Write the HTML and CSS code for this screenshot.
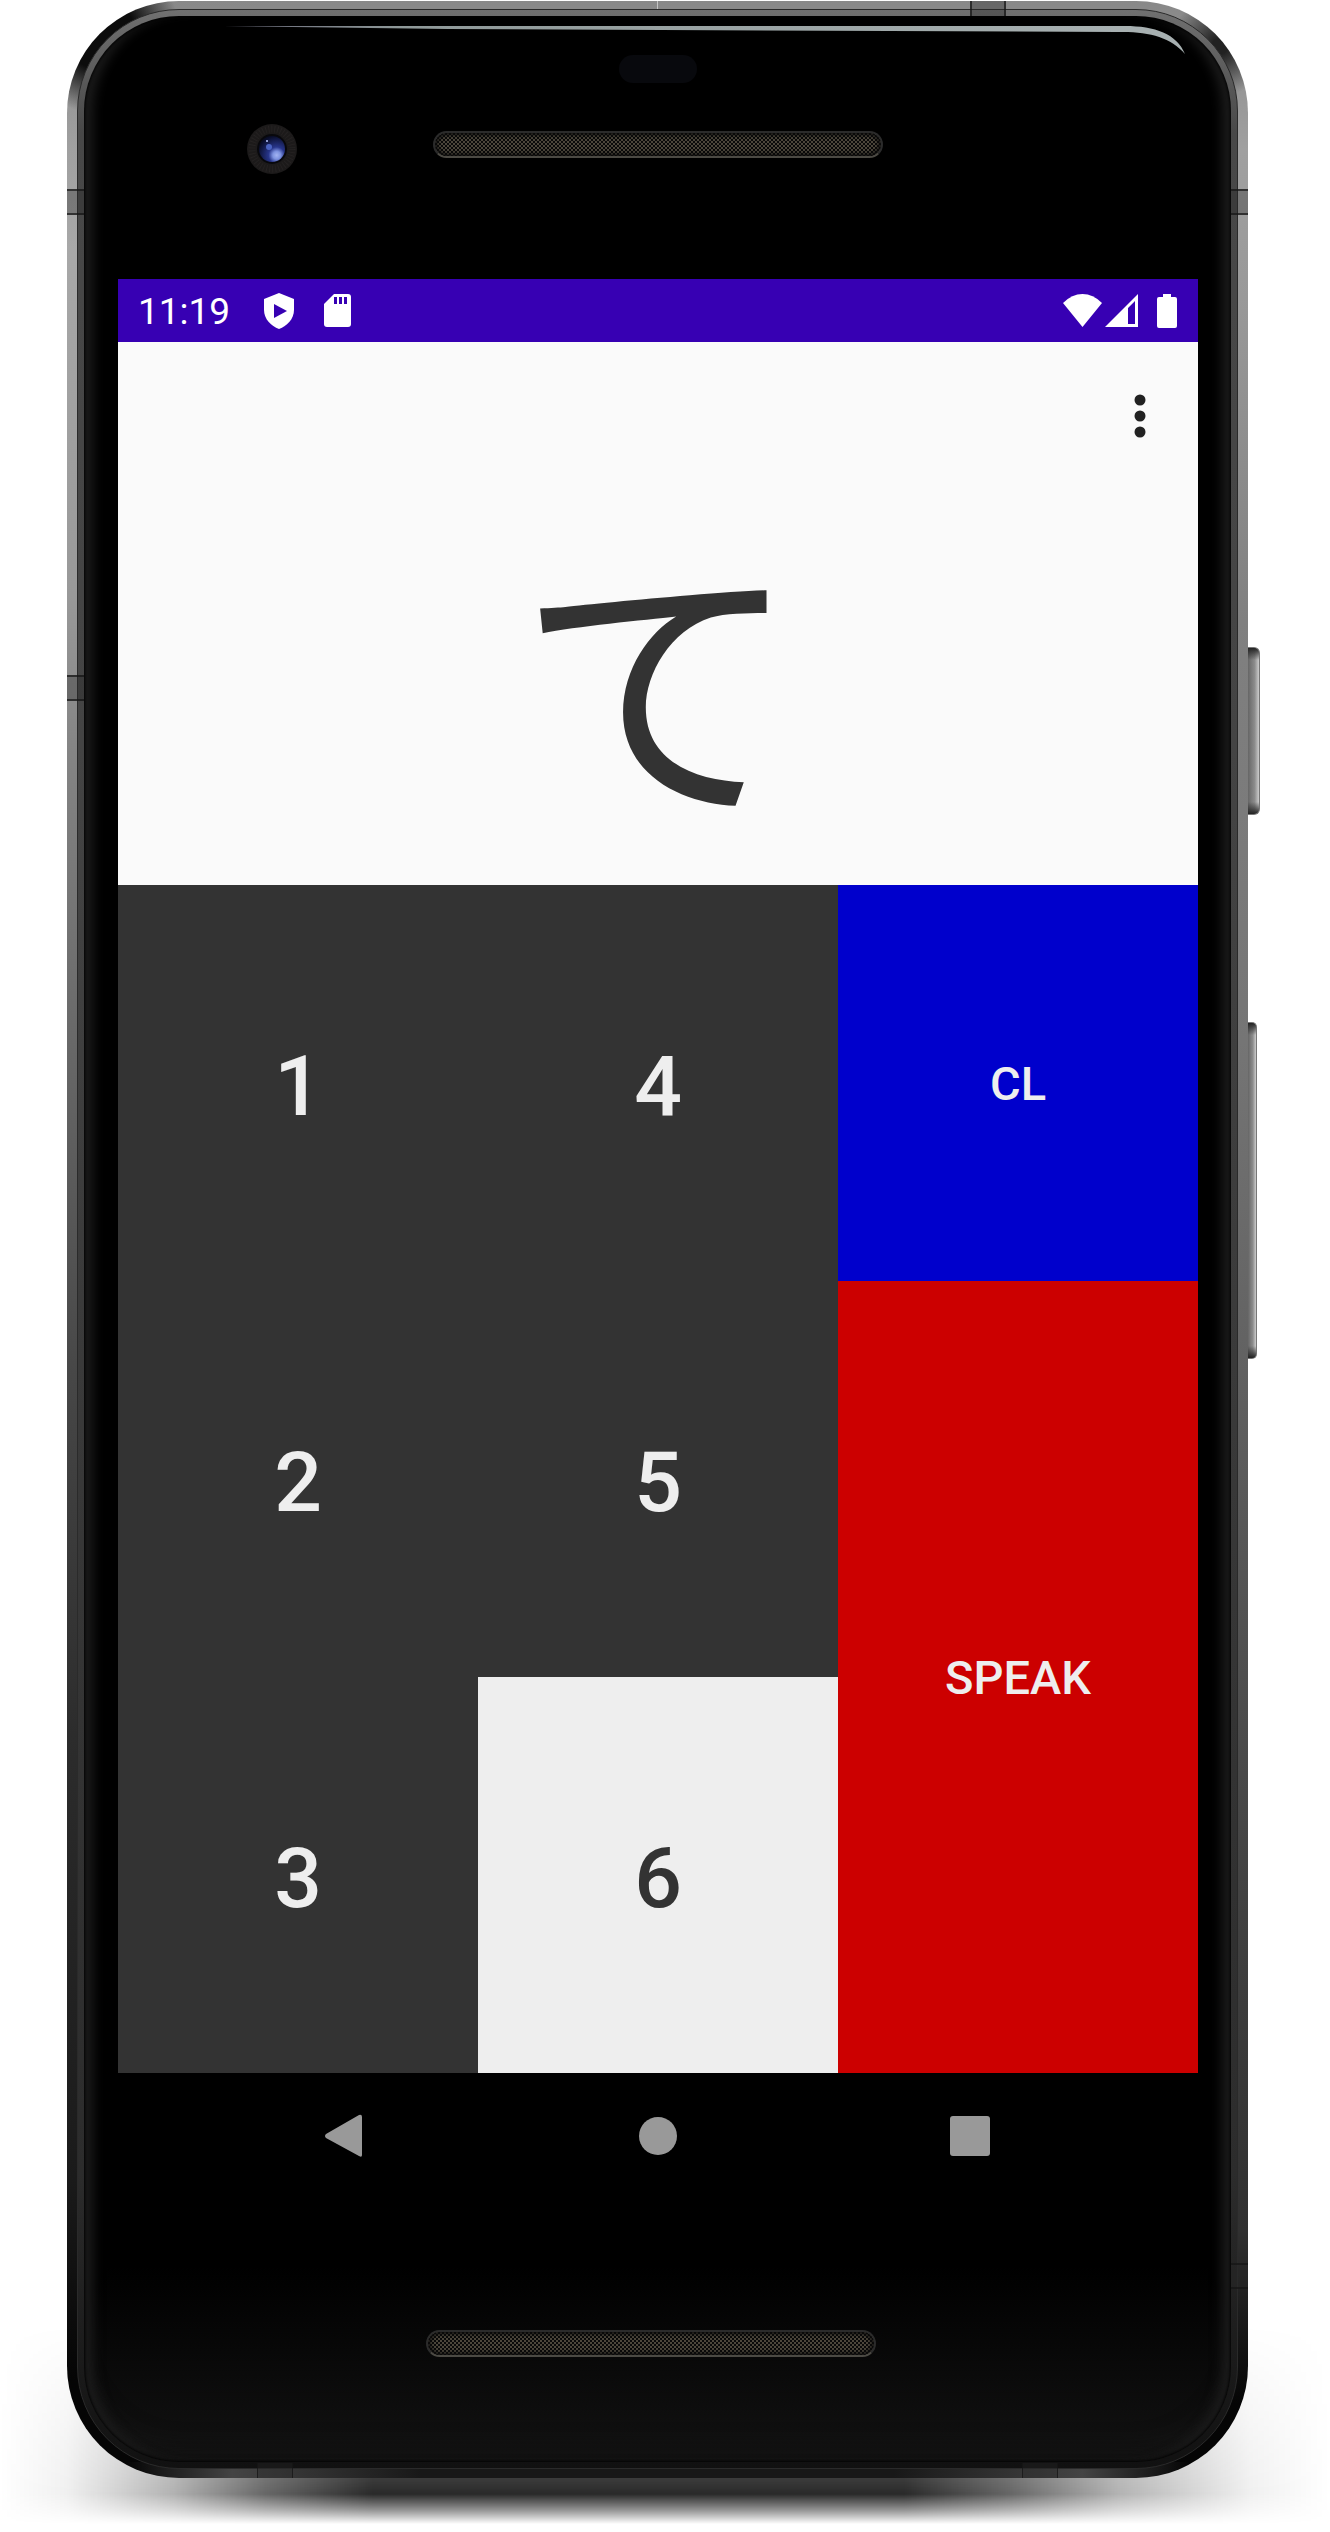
FILE: index.html
```html
<!DOCTYPE html>
<html lang="en">
<head>
<meta charset="utf-8">
<meta name="viewport" content="width=device-width, initial-scale=1">
<title>Kana keypad</title>
<link rel="stylesheet" href="styles.css">
</head>
<body>
<main class="stage">
  <div class="shadow"></div>
  <div class="phone">
    <span class="side-key power"></span>
    <span class="side-key volume"></span>
    <div class="rim">
      <div class="glass">
        <span class="shine">
          <svg class="shine-corner" viewBox="0 0 70 32" aria-hidden="true"><path d="M0 0H8C38 0 60 8 68 28C54 12 34 6 6 6H0Z" fill="#a7b0b1"/></svg>
        </span>
        <header class="top-bezel">
          <span class="sensor"></span>
          <span class="camera">
            <svg viewBox="0 0 52 52" aria-hidden="true">
              <defs>
                <radialGradient id="lens" cx=".68" cy=".74" r=".75">
                  <stop offset="0" stop-color="#a3b4f2"/><stop offset=".2" stop-color="#7d92e0"/><stop offset=".42" stop-color="#27358a"/><stop offset="1" stop-color="#080c26"/>
                </radialGradient>
              </defs>
              <circle cx="26" cy="26" r="25" fill="#1c1a1a"/>
              <circle cx="26" cy="26" r="20" fill="none" stroke="#252222" stroke-width="7" stroke-dasharray="1 2"/>
              <circle cx="26" cy="26" r="15" fill="#08080c"/>
              <circle cx="26" cy="26" r="13" fill="url(#lens)"/>
              <circle cx="23" cy="24" r="3" fill="#4a62c0"/>
              <circle cx="21" cy="18" r="1" fill="#b9c6ff"/>
            </svg>
          </span>
          <span class="speaker"></span>
        </header>

        <section class="screen">
          <div class="status">
            <time class="clock">11:19</time>
            <svg class="shield" viewBox="0 0 30 36" aria-hidden="true"><path fill="#fff" d="M15 0L30 6V17C30 26 23 33 15 36C7 33 0 26 0 17V6Z"/><path fill="#3700b3" d="M10 11V25L23 18Z"/></svg>
            <svg class="card" viewBox="0 0 27 33" aria-hidden="true"><path fill="#fff" d="M10 0H24Q27 0 27 3V30Q27 33 24 33H3Q0 33 0 30V10Z"/><path fill="#3700b3" d="M10 3h3v7h-3zM15 3h3v7h-3zM20 3h3v7h-3z"/></svg>
            <span class="spacer"></span>
            <svg class="wifi" viewBox="0 0 39 33" aria-hidden="true"><path fill="#fff" d="M0 9Q9 0 19.5 0T39 9L19.5 33Z"/></svg>
            <svg class="signal" viewBox="0 0 33 33" aria-hidden="true"><path fill="#fff" fill-rule="evenodd" d="M33 0V33H0ZM30 7L23 14V30H30Z"/></svg>
            <svg class="battery" viewBox="0 0 20 34" aria-hidden="true"><path fill="#fff" d="M6 0H14V3H18Q20 3 20 5V32Q20 34 18 34H2Q0 34 0 32V5Q0 3 2 3H6Z"/></svg>
          </div>

          <div class="display">
            <button class="menu" type="button" aria-label="More options">
              <svg viewBox="0 0 12 44" aria-hidden="true"><g fill="#212121"><circle cx="6" cy="6" r="5.5"/><circle cx="6" cy="22" r="5.5"/><circle cx="6" cy="38" r="5.5"/></g></svg>
            </button>
            <output class="kana" lang="ja">て</output>
          </div>

          <div class="keypad">
            <button class="key" type="button">1</button>
            <button class="key" type="button">2</button>
            <button class="key" type="button">3</button>
            <button class="key" type="button">4</button>
            <button class="key" type="button">5</button>
            <button class="key pressed" type="button" aria-pressed="true">6</button>
            <button class="key clear" type="button">CL</button>
            <button class="key speak" type="button">SPEAK</button>
          </div>

          <nav class="nav">
            <button type="button" aria-label="Back"><svg viewBox="0 0 42 42" aria-hidden="true"><path fill="#999" d="M34 0Q37 -1 37 2V40Q37 43 34 41L1 23Q-1 21 1 19Z"/></svg></button>
            <button type="button" aria-label="Home"><svg viewBox="0 0 42 42" aria-hidden="true"><circle cx="21" cy="21" r="19" fill="#999"/></svg></button>
            <button type="button" aria-label="Overview"><svg viewBox="0 0 42 42" aria-hidden="true"><rect x="1" y="1" width="40" height="40" rx="3" fill="#999"/></svg></button>
          </nav>
        </section>

        <footer class="bottom-bezel"><span class="speaker"></span></footer>
      </div>
    </div>
    <span class="band left high"></span>
    <span class="band left mid"></span>
    <span class="band right high"></span>
    <span class="band right low"></span>
    <span class="band top"></span>
    <span class="band bottom start"></span>
    <span class="band bottom end"></span>
  </div>
</main>
</body>
</html>
```
FILE: styles.css
```css
* { box-sizing: border-box; }

body {
  margin: 0;
  background: #fff;
  font-family: Roboto, "Noto Sans CJK JP", sans-serif;
}

button {
  margin: 0;
  padding: 0;
  border: 0;
  background: none;
  font: inherit;
  color: inherit;
}

svg { display: block; }

.stage {
  position: relative;
  padding: 1px 82px 54px 67px;
  overflow: hidden;
}

/* Floor shadow, wider than the body and darkest under its middle */
.shadow {
  position: absolute;
  left: 0;
  right: 0;
  bottom: 8px;
  height: 200px;
  background: linear-gradient(90deg, transparent, rgba(0,0,0,.06) 5%, rgba(0,0,0,.3) 13%, rgba(0,0,0,.6) 20%, rgba(0,0,0,.84) 28%, rgba(0,0,0,.84) 68%, rgba(0,0,0,.6) 76%, rgba(0,0,0,.3) 84%, rgba(0,0,0,.06) 94%, transparent);
  -webkit-mask-image: linear-gradient(transparent, rgba(0,0,0,.5) 40%, #000 85%, rgba(0,0,0,.5) 93%, transparent);
  mask-image: linear-gradient(transparent, rgba(0,0,0,.5) 40%, #000 85%, rgba(0,0,0,.5) 93%, transparent);
}

/* Metal body: dark reflections in the top corners, left side darker than right */
.phone {
  position: relative;
  padding: 8px 10px 9px;
  border-radius: 112px;
  background:
    radial-gradient(circle at 33px 33px, #0c0c0c 35px, transparent 80px) 0 0 / 120px 120px no-repeat,
    radial-gradient(circle at 92px 45px, #222 8px, transparent 50px) 100% 0 / 120px 120px no-repeat,
    linear-gradient(90deg, transparent 5%, #444 14%, #181818 30%, #181818 70%, #444 86%, transparent 95%) 0 100% / 100% 16px no-repeat,
    linear-gradient(#888, #a0a0a0 6%, #a8a8a8 10%, #999 24%, #858585 30%, #666 43%, #484848 55%, #2c2c2c 70%, #1a1a1a 88%, #050505 96%) 0 0 / 50% 100% no-repeat,
    linear-gradient(#888, #a0a0a0 6%, #999 12%, #808080 25%, #757575 42%, #606060 56%, #444 75%, #303030 90%, #050505 97%) 100% 0 / 50% 100% no-repeat;
}

.rim {
  padding: 7px;
  border-radius: 102px;
  border: 1px solid #2a2a2a;
  background: linear-gradient(#707070, #484848 5%, #444 30%, #383838 60%, #2c2c2c 88%, #111);
}

.glass {
  position: relative;
  margin: -1px;
  border-radius: 95px;
  background: linear-gradient(transparent 92%, #101010 99%, #0a0a0a) #000;
  box-shadow: inset 0 0 3px 1px #000, inset 15px 0 12px -6px #1c1c1c, inset -15px 0 12px -6px #1c1c1c, inset 0 -24px 30px -20px #1c1c1c;
}

.shine {
  position: absolute;
  top: 10px;
  left: 140px;
  right: 44px;
  height: 32px;
}

.shine::before {
  content: "";
  position: absolute;
  inset: 0 69px auto 0;
  height: 6px;
  background: linear-gradient(90deg, #667, #8f9999 20%, #a7b0b1);
  clip-path: polygon(0 0, 100% 0, 100% 100%, 25% 3px);
}

.shine-corner {
  position: absolute;
  top: 0;
  right: 0;
  width: 70px;
  height: 32px;
}

.top-bezel {
  position: relative;
  height: 263px;
  display: flex;
  justify-content: center;
}

.sensor {
  position: absolute;
  top: 39px;
  width: 78px;
  height: 28px;
  border-radius: 14px;
  background: #08090d;
}

.camera {
  position: absolute;
  left: 162px;
  top: 107px;
  width: 52px;
}

.speaker {
  width: 450px;
  height: 27px;
  border: 2px solid #2b2b2b;
  border-bottom-color: #4c4a44;
  border-radius: 14px;
  background:
    radial-gradient(circle at 1px 1px, #4c463b 1px, transparent 1px) 0 0 / 4px 4px,
    radial-gradient(circle at 3px 3px, #4c463b 1px, transparent 1px) 0 0 / 4px 4px,
    #0a0a0a;
  box-shadow: inset 0 0 4px 2px #0a0a0a;
}

.top-bezel .speaker { margin-top: 115px; }

.bottom-bezel {
  height: 263px;
  display: flex;
  justify-content: center;
  padding: 131px 14px 0 0;
}

.screen {
  margin: 0 33px 0 34px;
  background: #fafafa;
}

.status {
  height: 63px;
  display: flex;
  align-items: center;
  padding: 0 21px 0 20px;
  background: #3700b3;
  color: #fff;
}

.clock {
  width: 126px;
  padding-top: 2px;
  font-size: 37px;
  line-height: 44px;
}

.shield { width: 30px; height: 36px; }
.card { width: 27px; height: 33px; margin-left: 30px; }
.spacer { flex: 1; }
.wifi { width: 39px; height: 33px; }
.signal { width: 33px; height: 33px; margin-left: 3px; }
.battery { width: 20px; height: 34px; margin-left: 19px; }

.display {
  position: relative;
  height: 543px;
  display: flex;
  align-items: center;
  justify-content: center;
  padding-top: 120px;
  color: #333;
}

.menu {
  position: absolute;
  top: 26px;
  right: 10px;
  width: 96px;
  height: 96px;
  display: grid;
  place-items: center;
}

.menu svg { width: 12px; height: 44px; }

.kana {
  font-family: "Noto Sans CJK JP", sans-serif;
  font-size: 284px;
  line-height: 400px;
}

.keypad {
  display: grid;
  grid-template-columns: repeat(3, 1fr);
  grid-template-rows: repeat(3, 396px);
  grid-auto-flow: column;
}

.key {
  padding-top: 6px;
  background: #333;
  color: #eee;
  font-size: 84px;
  font-weight: 500;
}

.key.pressed { background: #eee; color: #333; }
.key.clear { padding-top: 0; background: #00c; font-size: 47px; }
.key.speak { grid-row: span 2; padding-top: 0; background: #c00; font-size: 47px; }

.nav {
  height: 126px;
  padding: 0 72px;
  display: grid;
  grid-template-columns: repeat(3, 1fr);
  background: #000;
}

.nav button { display: grid; place-items: center; }
.nav svg { width: 42px; height: 42px; overflow: visible; }

/* Antenna bands across the metal frame */
.band {
  position: absolute;
  background: rgba(40,40,40,.35);
  border: 0 solid rgba(20,20,20,.7);
}

.band.left { left: 0; width: 17px; height: 26px; border-width: 2px 0; }
.band.right { right: 0; width: 17px; height: 26px; border-width: 2px 0; }
.band.top { top: 0; right: 242px; width: 36px; height: 15px; border-width: 0 2px; }
.band.bottom { bottom: 0; width: 36px; height: 15px; border-width: 0 1px; }
.band.high { top: 188px; }
.band.mid { top: 674px; }
.band.low { bottom: 189px; }
.band.start { left: 190px; }
.band.end { right: 190px; }

.side-key {
  position: absolute;
  left: 100%;
  border: 1px solid #777;
  border-left: 0;
  background:
    linear-gradient(#222, transparent 12px),
    linear-gradient(0deg, #222, transparent 12px),
    linear-gradient(90deg, #666, #8c8c8c 60%, #ccc);
}

.power { top: 646px; width: 12px; height: 168px; border-radius: 0 6px 6px 0; }
.volume { top: 1021px; width: 9px; height: 337px; border-radius: 0 5px 5px 0; }
```
